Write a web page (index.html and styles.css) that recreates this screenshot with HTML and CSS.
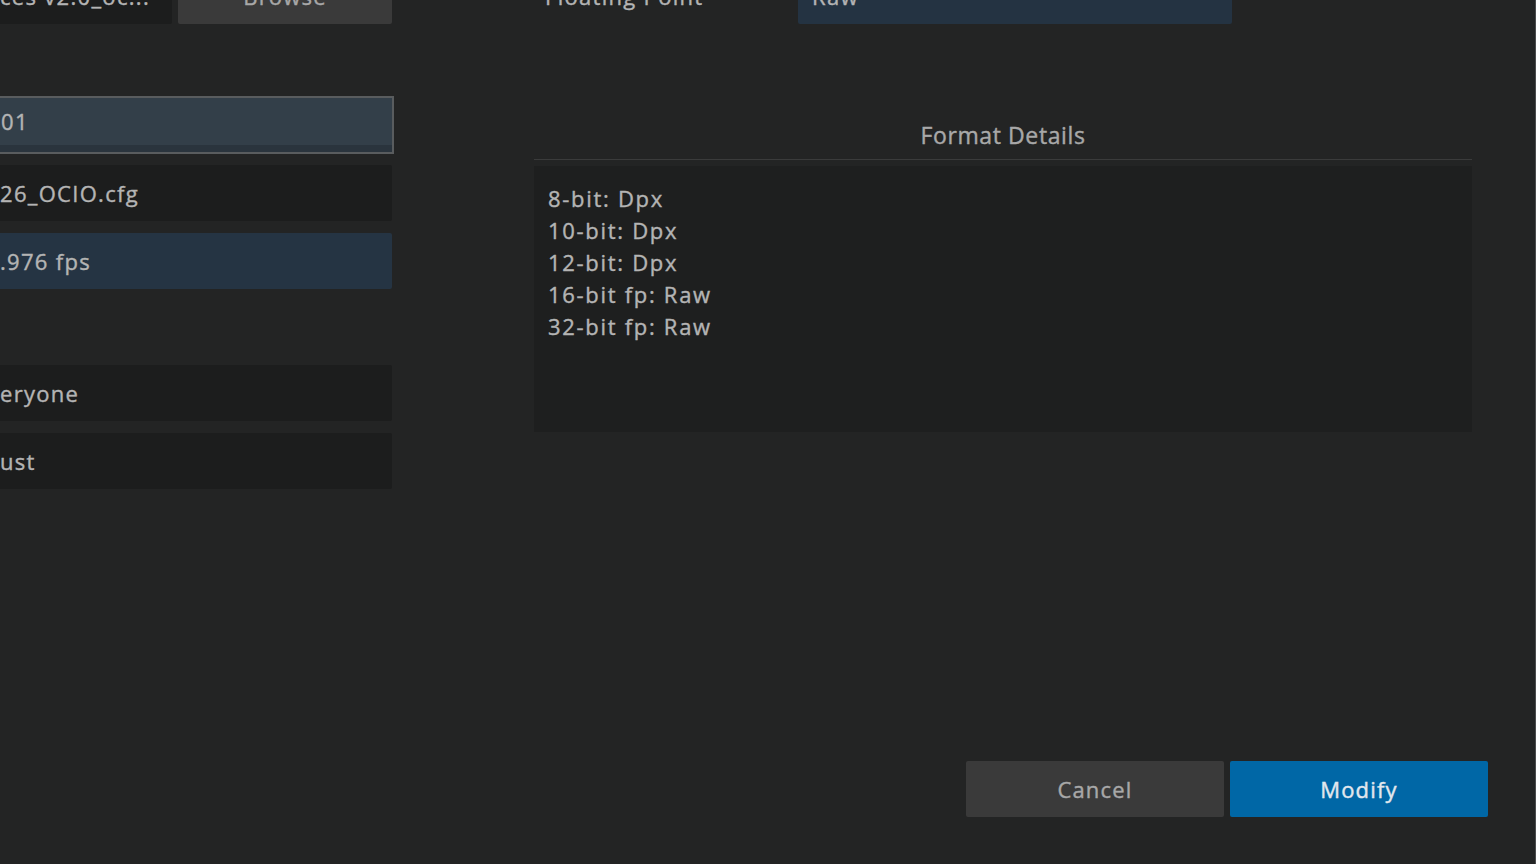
FILE: index.html
```html
<!DOCTYPE html>
<html lang="en">
<head>
    <meta charset="UTF-8">
    <meta name="viewport" content="width=device-width, initial-scale=1.0">
    <title>Modify Project Settings</title>
    <link rel="stylesheet" href="styles.css">
</head>
<body>
    <div class="dialog">
        <div class="columns">
            <!-- Left: project fields -->
            <div class="left-col">
                <div class="row split">
                    <div class="field path">ces v2.0_oc...</div>
                    <button class="btn browse">Browse</button>
                </div>
                <div class="field input-active">01</div>
                <div class="field">26_OCIO.cfg</div>
                <div class="field selected">.976 fps</div>
                <div class="field spaced">eryone</div>
                <div class="field">ust</div>
            </div>

            <!-- Right: format settings -->
            <div class="right-col">
                <div class="row option">
                    <span class="label">Floating Point</span>
                    <div class="field dropdown">Raw</div>
                </div>
                <h3 class="section-title">Format Details</h3>
                <div class="details">
                    <div>8-bit: Dpx</div>
                    <div>10-bit: Dpx</div>
                    <div>12-bit: Dpx</div>
                    <div>16-bit fp: Raw</div>
                    <div>32-bit fp: Raw</div>
                </div>
            </div>
        </div>

        <div class="footer">
            <button class="btn">Cancel</button>
            <button class="btn primary">Modify</button>
        </div>
    </div>
</body>
</html>
```

FILE: styles.css
```css
/* Page */
body {
    margin: 0;
    height: 864px;
    overflow: hidden;
    background: #232424;
    font-family: "Open Sans", "Noto Sans", sans-serif;
    font-size: 22px;
    letter-spacing: 1.3px;
    color: #b4b4b4;
    -webkit-text-stroke: 0.4px currentColor; /* heavier strokes like the app font */
}

.dialog {
    height: 864px;
    box-sizing: border-box;
    border-right: 1px solid #4b4c4d;
    display: flex;
    flex-direction: column;
    overflow: hidden;
}

.columns {
    display: flex;
    margin-top: -32px;
}

/* Left column */
.left-col {
    width: 402px;
    margin-left: -10px;
    display: flex;
    flex-direction: column;
}

.row {
    display: flex;
    align-items: center;
}

.split {
    gap: 6px;
    margin-bottom: 72px;
}

.field {
    height: 56px;
    box-sizing: border-box;
    padding-left: 10px;
    display: flex;
    align-items: center;
    background: #1c1d1d;
    border-radius: 2px;
    margin-bottom: 12px;
    white-space: nowrap;
}

.split .field,
.option .field {
    margin-bottom: 0;
}

.path {
    width: 182px;
}

.input-active {
    height: 58px;
    background: #333f49;
    border: 2px solid #595c5e;
    border-radius: 0;
    box-shadow: inset 0 -7px 0 #2a343d;
    padding-left: 9px;
    padding-bottom: 8px;
    width: 404px;
    margin-bottom: 11px;
}

.selected {
    background: #253443;
}

.spaced {
    margin-top: 64px;
}

/* Right column */
.right-col {
    width: 938px;
    margin-left: 142px;
    display: flex;
    flex-direction: column;
}

.option {
    height: 56px;
}

.label {
    width: 253px;
    padding-left: 11px;
}

.dropdown {
    width: 434px;
    background: #243342;
    padding-left: 14px;
}

.section-title {
    margin: 89px 0 0;
    height: 46px;
    border-bottom: 1px solid #3a3b3b;
    text-align: center;
    font-weight: normal;
    font-size: 23px;
    letter-spacing: 0.6px;
    color: #a8a8a8;
    line-height: 44px;
}

.details {
    margin-top: 6px;
    height: 266px;
    box-sizing: border-box;
    padding: 16px 14px;
    background: #1e1f1f;
    line-height: 32px;
    letter-spacing: 1.7px;
}

/* Buttons */
.btn {
    width: 258px;
    height: 56px;
    border: none;
    border-radius: 2px;
    background: #3a3a3a;
    color: #a8a8a8;
    font-family: inherit;
    font-size: 22px;
    letter-spacing: 1.2px;
    -webkit-text-stroke: 0.4px currentColor;
    cursor: pointer;
}

.browse {
    width: 214px;
}

.primary {
    background: #0067a6;
    color: #e2e8ee;
}

.footer {
    margin-top: auto;
    margin-bottom: 47px;
    padding-right: 47px;
    display: flex;
    justify-content: flex-end;
    gap: 6px;
}
```
